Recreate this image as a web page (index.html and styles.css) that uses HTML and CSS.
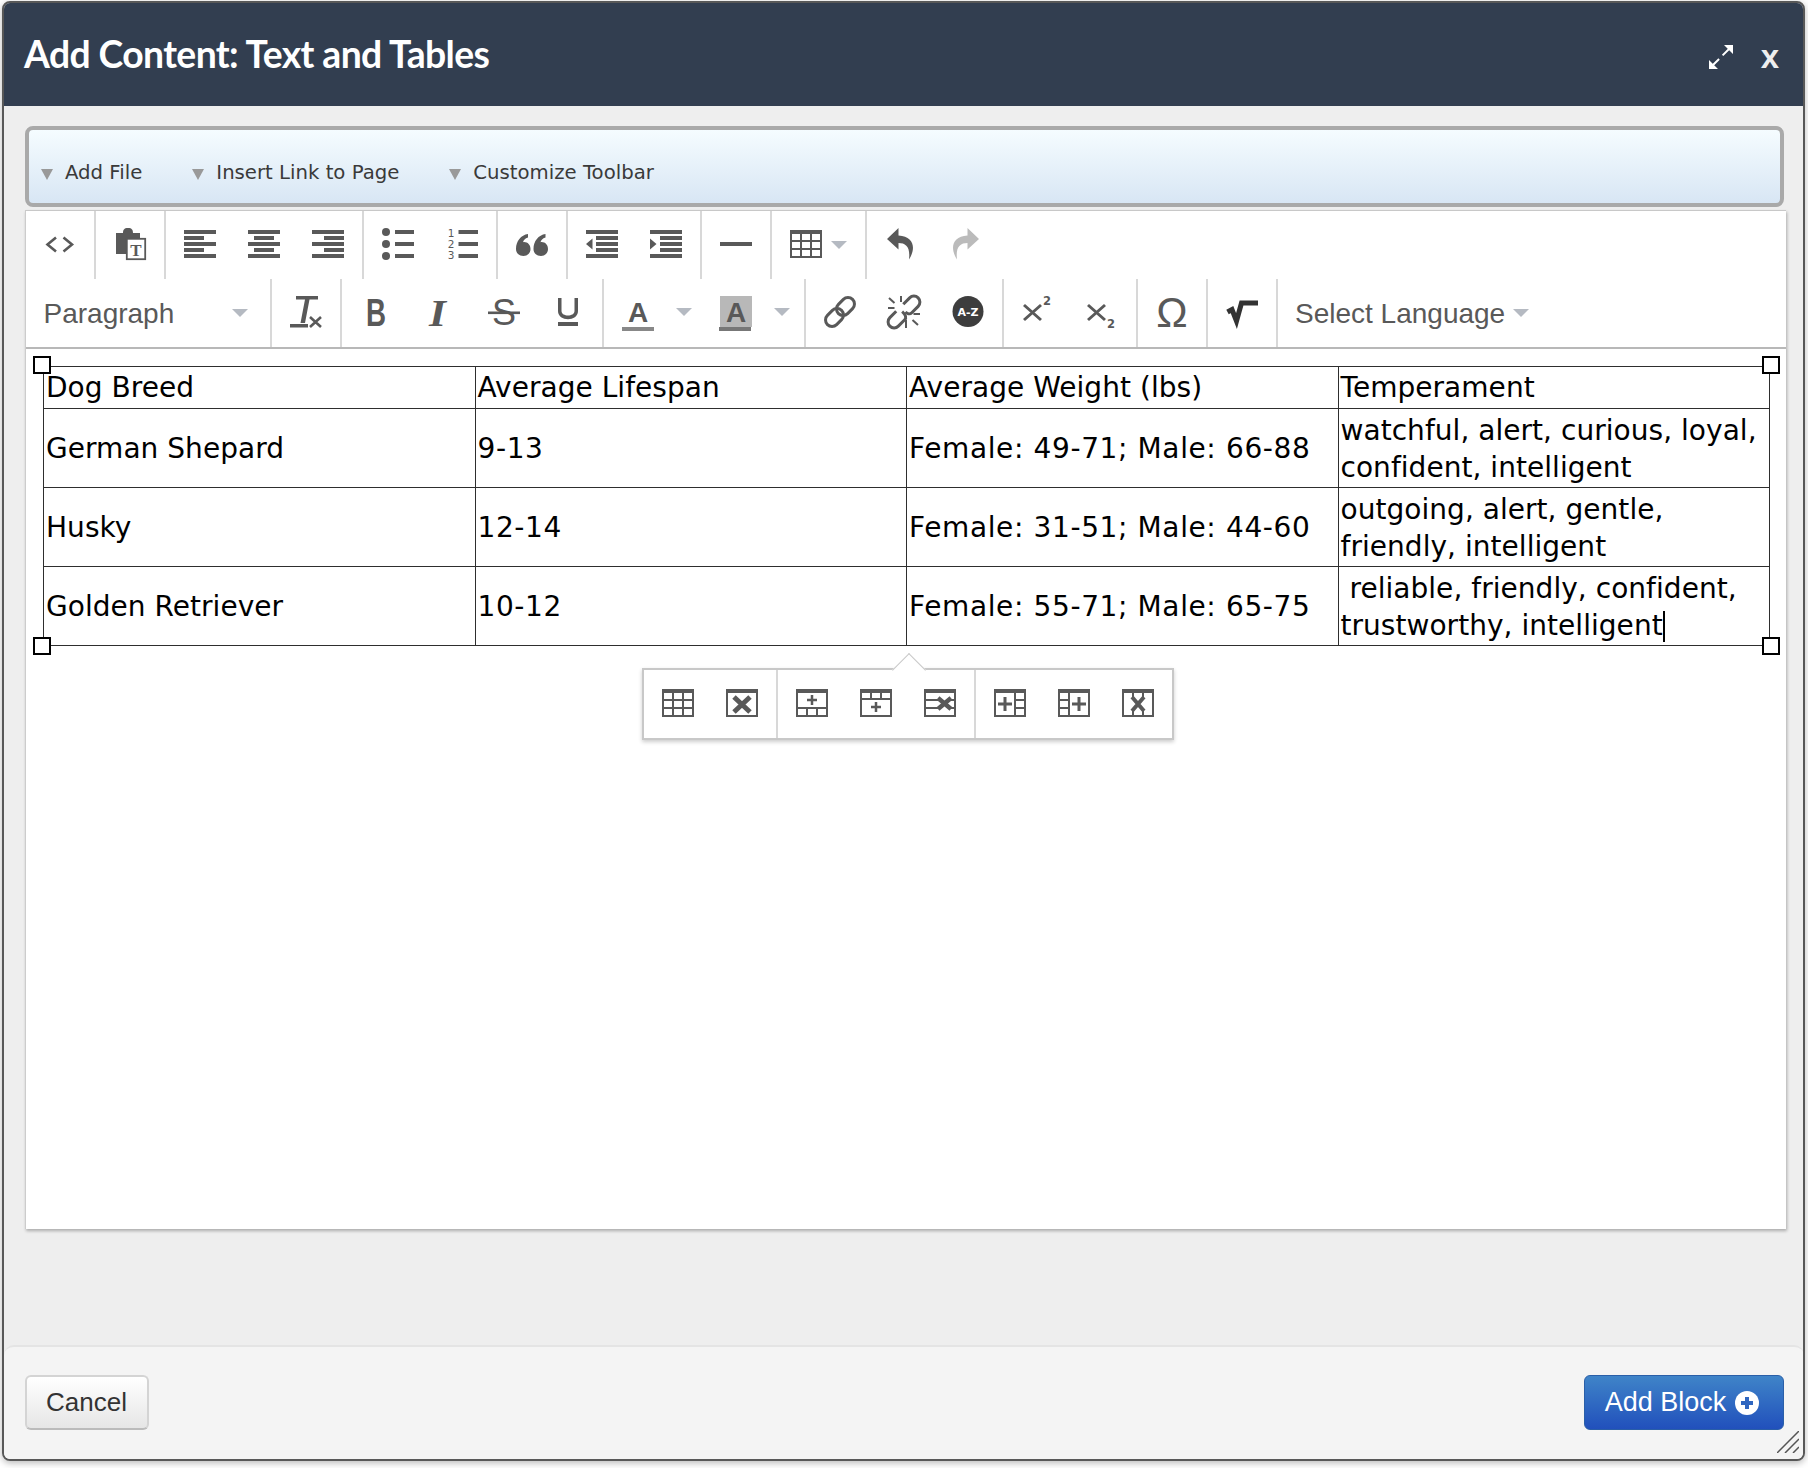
FILE: index.html
```html
<!DOCTYPE html>
<html lang="en">
<head>
<meta charset="utf-8">
<title>Add Content: Text and Tables</title>
<link rel="stylesheet" href="styles.css">
</head>
<body>
<div class="dialog">
  <header class="dlg-head">
    <h1 class="dlg-title">Add Content: Text and Tables</h1>
    <div class="dlg-actions">
      <svg class="expand" viewBox="0 0 24 24"><path d="M3 21 21 3" stroke="#fff" stroke-width="2" stroke-dasharray="10 5 20" fill="none"/><path d="M0 24V15L9 24ZM24 0V9L15 0Z" fill="#fff"/></svg>
      <span class="close-x">x</span>
    </div>
  </header>
  <main class="dlg-body">
    <nav class="strip">
      <span class="strip-item">Add File</span>
      <span class="strip-item strip-second">Insert Link to Page</span>
      <span class="strip-item">Customize Toolbar</span>
    </nav>
    <section class="editor">
      <div class="tb-row">
        <div class="grp">
          <span class="btn"><svg class="ic" viewBox="0 0 32 32"><path d="M12 8.5 3.5 15.5 12 22.5M19.5 8.5 28 15.5 19.5 22.5" fill="none" stroke="#595959" stroke-width="2.6"/></svg></span>
        </div>
        <div class="grp">
          <span class="btn"><svg class="ic" viewBox="0 0 32 32"><path d="M2 4H9C9 1 10 -1 14 -1S19 1 19 4H26V25H2Z"/><rect x="12.8" y="9.8" width="18.4" height="20.4" fill="#fff" stroke="#595959" stroke-width="1.8"/><text x="22" y="27" class="t-serif">T</text></svg></span>
        </div>
        <div class="grp">
          <span class="btn"><svg class="ic" viewBox="0 0 32 32"><path d="M0 1H32V5H0ZM0 7H20V11H0ZM0 13H32V17H0ZM0 19H20V23H0ZM0 25H32V29H0Z"/></svg></span>
          <span class="btn"><svg class="ic" viewBox="0 0 32 32"><path d="M0 1H32V5H0ZM6 7H26V11H6ZM0 13H32V17H0ZM6 19H26V23H6ZM0 25H32V29H0Z"/></svg></span>
          <span class="btn"><svg class="ic" viewBox="0 0 32 32"><path d="M0 1H32V5H0ZM12 7H32V11H12ZM0 13H32V17H0ZM12 19H32V23H12ZM0 25H32V29H0Z"/></svg></span>
        </div>
        <div class="grp">
          <span class="btn"><svg class="ic" viewBox="0 0 32 32"><circle cx="4" cy="3" r="4"/><circle cx="4" cy="15" r="4"/><circle cx="4" cy="27" r="4"/><path d="M13 1H32V5H13ZM13 13H32V17H13ZM13 25H32V29H13Z"/></svg></span>
          <span class="btn"><svg class="ic" viewBox="0 0 32 32"><path d="M12.500 1H32V5H12.500ZM12.500 13H32V17H12.500ZM12.500 25H32V29H12.500Z"/><text x="5" y="8" class="t-num">1</text><text x="5" y="19" class="t-num">2</text><text x="5" y="30" class="t-num">3</text></svg></span>
        </div>
        <div class="grp">
          <span class="btn"><svg class="ic" viewBox="0 0 32 32"><path d="M0 20C0 12 5 6 12 5V8.500C9 9.500 7.500 11 7 13.200 11 12.500 14.500 15.500 14.500 20 14.500 24 11.500 27 7.500 27 3 27 0 24 0 20ZM17.500 20C17.500 12 22.500 6 29.500 5V8.500C26.500 9.500 25 11 24.500 13.200 28.500 12.500 32 15.500 32 20 32 24 29 27 25 27 20.500 27 17.500 24 17.500 20Z"/></svg></span>
        </div>
        <div class="grp">
          <span class="btn"><svg class="ic" viewBox="0 0 32 32"><path d="M0 1H32V5H0ZM10 7H32V11H10ZM10 13H32V17H10ZM10 19H32V23H10ZM0 25H32V29H0ZM0 15 6.500 9.500V20.500Z"/></svg></span>
          <span class="btn"><svg class="ic" viewBox="0 0 32 32"><path d="M0 1H32V5H0ZM10 7H32V11H10ZM10 13H32V17H10ZM10 19H32V23H10ZM0 25H32V29H0ZM6.500 15 0 9.500V20.500Z"/></svg></span>
        </div>
        <div class="grp">
          <span class="btn"><svg class="ic" viewBox="0 0 32 32"><rect y="13" width="32" height="4"/></svg></span>
        </div>
        <div class="grp">
          <span class="btn btn-split"><svg class="ic" viewBox="0 0 32 32"><path fill-rule="evenodd" d="M0 1H32V29H0ZM2 5V11H10V5ZM12 5V11H20V5ZM22 5V11H30V5ZM2 13V19H10V13ZM12 13V19H20V13ZM22 13V19H30V13ZM2 21V27H10V21ZM12 21V27H20V21ZM22 21V27H30V21Z"/></svg><i class="caret"></i></span>
        </div>
        <div class="grp grp-last">
          <span class="btn"><svg class="ic" viewBox="0 0 32 32"><path d="M13.500 -1 2 10 13.500 20.500V14C21 14 25.500 18 24 30.500 31 20 29.500 7.500 13.500 6.500Z"/></svg></span>
          <span class="btn"><svg class="ic ic-off" viewBox="0 0 32 32"><path d="M18.500 -1 30 10 18.500 20.500V14C11 14 6.500 18 8 30.500 1 20 2.500 7.500 18.500 6.500Z"/></svg></span>
        </div>
      </div>
      <div class="tb-row tb-row-2">
        <div class="grp grp-list">
          <span class="listbox">Paragraph</span><i class="caret caret-list"></i>
        </div>
        <div class="grp">
          <span class="btn"><svg class="ic" viewBox="0 0 32 32"><path d="M6 0H28V3.500H19.500L15 27H10.500L15 3.500H6ZM0 28H18V31.500H0Z"/><path d="M20 21 31 31M31 21 20 31" stroke="#595959" stroke-width="2.600"/></svg></span>
        </div>
        <div class="grp">
          <span class="btn"><svg class="ic" viewBox="0 0 32 32"><text transform="translate(6 30) scale(.73 1)" class="t-bold t-38">B</text></svg></span>
          <span class="btn"><svg class="ic" viewBox="0 0 32 32"><text transform="translate(5 30) scale(1.15 1)" class="t-ital t-38">I</text></svg></span>
          <span class="btn"><svg class="ic" viewBox="0 0 32 32"><text x="16" y="29" class="t-reg t-36 t-mid">S</text><rect x="0" y="15.500" width="32" height="2.600"/></svg></span>
          <span class="btn"><svg class="ic" viewBox="0 0 32 32"><path d="M6 2H9.500V15C9.500 21 22.500 21 22.500 15V2H26V15C26 26 6 26 6 15ZM6 26H26V30H6Z"/></svg></span>
        </div>
        <div class="grp">
          <span class="btn btn-color"><svg class="ic" viewBox="0 0 32 32"><text x="16" y="26" class="t-bold t-28 t-mid">A</text><rect x="0" y="31" width="32" height="4" fill="#888"/></svg><i class="caret"></i></span>
          <span class="btn btn-color"><svg class="ic" viewBox="0 0 32 32"><rect width="32" height="31" fill="#b8b8b8"/><text x="16" y="26" class="t-bold t-28 t-mid">A</text><rect x="-1" y="31" width="32" height="4" fill="#777"/></svg><i class="caret"></i></span>
        </div>
        <div class="grp">
          <span class="btn"><svg class="ic ic-line" viewBox="0 0 32 32"><rect x="15" y="0.500" width="13" height="20" rx="6.500" transform="rotate(45 21.500 10.500)"/><rect x="4" y="11.500" width="13" height="20" rx="6.500" transform="rotate(45 10.500 21.500)"/></svg></span>
          <span class="btn"><svg class="ic ic-line" viewBox="0 0 32 32"><g transform="rotate(45 16 16)"><path d="M10 11V2A6 6 0 0 1 22 2V11C22 14 19 15 17 15"/><path d="M10 21V30A6 6 0 0 0 22 30V21C22 18 19 17 15 17C13 17 10 18 10 21Z" stroke-dasharray="46 100"/></g><path class="ray" d="M1 2 6.500 7M13 0V6M0 12H6.500M24.500 24 30 29M18 24V32M25.500 18H32"/></svg></span>
          <span class="btn"><svg class="ic" viewBox="0 0 32 32"><circle cx="16" cy="15.500" r="15.500" fill="#3d3d3d"/><text x="16" y="19.500" class="t-az">A-Z</text></svg></span>
        </div>
        <div class="grp">
          <span class="btn"><svg class="ic ic-line" viewBox="0 0 32 32"><path d="M2 9 19 24M19 9 2 24"/><text x="25" y="9" class="t-sub">2</text></svg></span>
          <span class="btn"><svg class="ic ic-line" viewBox="0 0 32 32"><path d="M2 9 19 24M19 9 2 24"/><text x="25" y="32" class="t-sub">2</text></svg></span>
        </div>
        <div class="grp">
          <span class="btn"><svg class="ic" viewBox="0 0 32 32"><text x="16" y="31" class="t-reg t-42 t-mid">Ω</text></svg></span>
        </div>
        <div class="grp">
          <span class="btn"><svg class="ic ic-root" viewBox="0 0 32 32"><path d="M1.500 16 6 13.500 10.500 25 15.500 7H32"/></svg></span>
        </div>
        <div class="lang"><span>Select Language</span><i class="caret caret-lang"></i></div>
      </div>
      <div class="content">
        <div class="table-wrap">
          <table class="data">
            <tbody>
              <tr class="r-head"><td>Dog Breed</td><td>Average Lifespan</td><td>Average Weight (lbs)</td><td>Temperament</td></tr>
              <tr><td>German Shepard</td><td class="num">9-13</td><td class="num">Female: 49-71; Male: 66-88</td><td>watchful, alert, curious, loyal,<br>confident, intelligent</td></tr>
              <tr><td>Husky</td><td class="num">12-14</td><td class="num">Female: 31-51; Male: 44-60</td><td>outgoing, alert, gentle,<br>friendly, intelligent</td></tr>
              <tr><td>Golden Retriever</td><td class="num">10-12</td><td class="num">Female: 55-71; Male: 65-75</td><td>&nbsp;reliable, friendly, confident,<br>trustworthy, intelligent<i class="text-caret"></i></td></tr>
            </tbody>
          </table>
          <i class="handle h-tl"></i><i class="handle h-tr"></i><i class="handle h-bl"></i><i class="handle h-br"></i>
        </div>
        <div class="popup">
          <div class="grp">
            <span class="btn"><svg class="ic" viewBox="0 0 32 32"><path fill-rule="evenodd" d="M0 1H32V29H0ZM2 5V11H10V5ZM12 5V11H20V5ZM22 5V11H30V5ZM2 13V19H10V13ZM12 13V19H20V13ZM22 13V19H30V13ZM2 21V27H10V21ZM12 21V27H20V21ZM22 21V27H30V21Z"/></svg></span>
            <span class="btn"><svg class="ic" viewBox="0 0 32 32"><path fill-rule="evenodd" d="M0 1H32V29H0ZM2 5V27H30V5Z"/><path d="M8 9 24 24M24 9 8 24" stroke="#595959" stroke-width="5"/></svg></span>
          </div>
          <div class="grp">
            <span class="btn"><svg class="ic" viewBox="0 0 32 32"><path fill-rule="evenodd" d="M0 1H32V29H0ZM2 5V19H30V5ZM2 21V27H10V21ZM12 21V27H20V21ZM22 21V27H30V21Z"/><path d="M16 7V17M11 12H21" stroke="#595959" stroke-width="2.500"/></svg></span>
            <span class="btn"><svg class="ic" viewBox="0 0 32 32"><path fill-rule="evenodd" d="M0 1H32V29H0ZM2 5V10H10V5ZM12 5V10H20V5ZM22 5V10H30V5ZM2 12V27H30V12Z"/><path d="M16 14V24M11 19H21" stroke="#595959" stroke-width="2.500"/></svg></span>
            <span class="btn"><svg class="ic" viewBox="0 0 32 32"><path fill-rule="evenodd" d="M0 1H32V29H0ZM2 5V27H30V5Z"/><path d="M2 12H14M2 20H14M27 12H30M27 20H30" stroke="#595959" stroke-width="2"/><path d="M14 10 27 21M27 10 14 21" stroke="#595959" stroke-width="4.500"/></svg></span>
          </div>
          <div class="grp grp-last">
            <span class="btn"><svg class="ic" viewBox="0 0 32 32"><path fill-rule="evenodd" d="M0 1H32V29H0ZM2 5V27H20V5ZM22 5V11H30V5ZM22 13V19H30V13ZM22 21V27H30V21Z"/><path d="M4 16H18M11 9V23" stroke="#595959" stroke-width="3"/></svg></span>
            <span class="btn"><svg class="ic" viewBox="0 0 32 32"><path fill-rule="evenodd" d="M0 1H32V29H0ZM12 5V27H30V5ZM2 5V11H10V5ZM2 13V19H10V13ZM2 21V27H10V21Z"/><path d="M14 16H28M21 9V23" stroke="#595959" stroke-width="3"/></svg></span>
            <span class="btn"><svg class="ic" viewBox="0 0 32 32"><path fill-rule="evenodd" d="M0 1H32V29H0ZM2 5V27H30V5Z"/><path d="M11 5V9M21 5V9M11 23V27M21 23V27" stroke="#595959" stroke-width="2"/><path d="M10 9 22 23M22 9 10 23" stroke="#595959" stroke-width="4"/></svg></span>
          </div>
        </div>
      </div>
    </section>
  </main>
  <footer class="dlg-foot">
    <button class="b-cancel" type="button">Cancel</button>
    <button class="b-add" type="button">Add Block<svg class="plus" viewBox="0 0 24 24"><circle cx="12" cy="12" r="12" fill="#fff"/><path d="M12 6V18M6 12H18" stroke="#2f66c0" stroke-width="4"/></svg></button>
    <svg class="grip" viewBox="0 0 22 22"><path d="M0 22 22 0M8 22 22 8M16 22 22 16" stroke="#555" stroke-width="1.500" fill="none"/></svg>
  </footer>
</div>
</body>
</html>
```
FILE: styles.css
```css
* { box-sizing: border-box; }
html, body { margin: 0; padding: 0; background: #fff; }
body { height: 1468px; overflow: hidden; font-family: "Liberation Sans", Arial, sans-serif; }

.dialog {
  position: relative;
  display: flex;
  flex-direction: column;
  width: 1803px;
  height: 1460px;
  margin: 1px 0 0 2px;
  border: 2px solid #585858;
  border-radius: 8px;
  background: #eee;
  box-shadow: 0 2px 7px rgba(0, 0, 0, .28);
  overflow: hidden;
}

.dlg-head {
  flex: none;
  display: flex;
  justify-content: space-between;
  height: 103px;
  padding: 0 24px 0 20px;
  background: #323e50;
  color: #fff;
}
.dlg-title {
  margin: 0;
  font: 700 37.300px/101px Lato, sans-serif;
  letter-spacing: -.6px;
}
.dlg-actions { display: flex; align-items: flex-start; padding-top: 42px; gap: 28px; }
.expand { width: 24px; height: 24px; }
.close-x { font: 700 33px/18px "Liberation Sans", sans-serif; color: #eee; margin-top: 3px; }

.dlg-body { flex: 1; padding: 20px 17px 0 21px; }

.strip {
  display: flex;
  height: 81px;
  margin-right: 2px;
  padding: 12px 0 0 12px;
  border: 4px solid #a9a9a9;
  border-radius: 8px;
  background: linear-gradient(#f5fcff, #d8e6f4);
  font: 19.700px/34px "DejaVu Sans", sans-serif;
  color: #3a3a3a;
  gap: 50px;
}
.strip-item { display: flex; align-items: center; gap: 12px; }
.strip-item::before {
  content: "";
  width: 0;
  height: 0;
  margin-top: 3px;
  border-style: solid;
  border-width: 11px 6.500px 0;
  border-color: #999 transparent transparent;
}

.editor {
  height: 1019px;
  margin-top: 3px;
  border-top: 1px solid #c8c8c8;
  border-left: 1px solid #ccc;
  background: #fff;
  box-shadow: 1px 2px 3px rgba(0, 0, 0, .28);
  display: flex;
  flex-direction: column;
}

.tb-row { display: flex; flex: none; height: 68px; padding-left: 1px; }
.tb-row-2 { height: 70px; border-bottom: 2px solid #b8b8b8; }
.grp { display: flex; flex: none; padding: 0 2px; border-right: 2px solid #d8d8d8; }
.grp:first-child { padding-left: 1px; }
.grp-last { border-right: 0; }
.btn { display: flex; align-items: center; justify-content: center; width: 64px; height: 100%; }
.btn-split { width: 89px; padding-left: 16px; justify-content: flex-start; gap: 9px; }
.btn-color { width: 98px; padding-left: 16px; justify-content: flex-start; gap: 22px; }
.tb-row-2 .btn { padding-bottom: 2px; }
.tb-row-2 .btn-color { padding-left: 16px; }

.ic { flex: none; width: 32px; height: 32px; overflow: visible; fill: #595959; }
.ic-off { fill: #bbb; }
.ic-line, .ic-root { fill: none; }
.ic-line rect, .ic-line path { stroke: #595959; stroke-width: 3; fill: none; }
.ic-line .ray { stroke-width: 2; }
.ic-line text { fill: #595959; stroke: none; }
.ic-root path { stroke: #333; stroke-width: 5; fill: none; }

.t-bold { font: 700 28px "Liberation Sans", sans-serif; }
.t-reg { font: 400 36px "Liberation Sans", sans-serif; }
.t-ital { font: italic 700 38px "Liberation Serif", serif; }
.t-38 { font-size: 38px; }
.t-36 { font-size: 36px; }
.t-28 { font-size: 28px; }
.t-42 { font-size: 42px; }
.t-mid { text-anchor: middle; }
.t-serif { font: 700 17px "Liberation Serif", serif; text-anchor: middle; }
.t-num { font: 400 10.500px "DejaVu Sans", sans-serif; text-anchor: middle; }
.t-az { font: 700 11px "DejaVu Sans", sans-serif; fill: #fff; text-anchor: middle; }
.t-sub { font: 700 11.500px "DejaVu Sans", sans-serif; text-anchor: middle; }

.caret {
  flex: none;
  width: 0;
  height: 0;
  border-style: solid;
  border-width: 8px 8px 0;
  border-color: #b5bac2 transparent transparent;
}
.grp.grp-list { width: 245px; padding: 0 0 0 16.500px; align-items: center; }
.listbox { font-size: 28px; color: #595959; line-height: 34px; width: 188px; padding-top: 2px; }
.lang { display: flex; align-items: center; padding-left: 17px; font-size: 28px; color: #595959; gap: 8px; }
.lang span { line-height: 34px; padding-top: 2px; }

.content { position: relative; flex: 1; padding: 17px 0 0 17px; }
.table-wrap { position: relative; width: 1727px; }
.data { width: 1727px; table-layout: fixed; border-collapse: collapse; font: 28px/36.900px "DejaVu Sans", sans-serif; letter-spacing: .04px; color: #000; }
.data td { padding: 3px 2px 0; border: 1px solid #2e2e2e; white-space: nowrap; height: 79px; }
.data td.num { letter-spacing: .62px; }
.data .r-head td { height: 42px; padding-top: 2px; padding-bottom: 0; }
.text-caret { display: inline-block; width: 2px; height: 31px; margin-right: -2px; background: #000; vertical-align: -7px; }

.handle { position: absolute; width: 18px; height: 18px; background: #fff; border: 2px solid #000; }
.h-tl { top: -10px; left: -10px; }
.h-tr { top: -10px; right: -10px; }
.h-bl { bottom: -9px; left: -10px; }
.h-br { bottom: -9px; right: -10px; }

.popup {
  position: absolute;
  top: 319px;
  left: 616px;
  display: flex;
  height: 72px;
  padding-left: 1px;
  border: 2px solid #c8c8c8;
  background: #fff;
  box-shadow: 0 2px 4px rgba(0, 0, 0, .2);
}
.popup::before {
  content: "";
  position: absolute;
  top: -12px;
  left: 253px;
  width: 23px;
  height: 23px;
  transform: rotate(45deg);
  border-top: 1.500px solid #c8c8c8;
  border-left: 1.500px solid #c8c8c8;
  background: #fff;
}
.popup .grp { position: relative; border-right-color: #d8d8d8; }
.popup .grp-last { border-right: 0; padding-right: 2px; }

.dlg-foot {
  position: relative;
  flex: none;
  display: flex;
  justify-content: space-between;
  align-items: flex-start;
  height: 114px;
  margin: 0 -1px 0 0;
  padding: 28px 20px 0 20.500px;
  background: #f4f4f4;
  border-top: 2px solid #e4e4e4;
  border-radius: 10px 10px 0 0;
}
.b-cancel, .b-add {
  display: flex;
  align-items: center;
  justify-content: center;
  height: 55px;
  border-radius: 6px;
  font-family: "Liberation Sans", Arial, sans-serif;
}
.b-cancel {
  width: 124px;
  padding: 0;
  border: 2px solid #d4d4d4;
  border-bottom-color: #bbb;
  background: linear-gradient(#fff, #e6e6e6);
  color: #333;
  font-size: 26px;
}
.b-add {
  width: 200px;
  padding: 0 4px 0 0;
  gap: 9px;
  border: 1px solid #2a5fa8;
  background: linear-gradient(#3f84c8, #2150bc);
  color: #fff;
  font-size: 27px;
}
.plus { width: 24px; height: 24px; }
.grip { position: absolute; right: 5px; bottom: 6px; width: 22px; height: 22px; }
```
